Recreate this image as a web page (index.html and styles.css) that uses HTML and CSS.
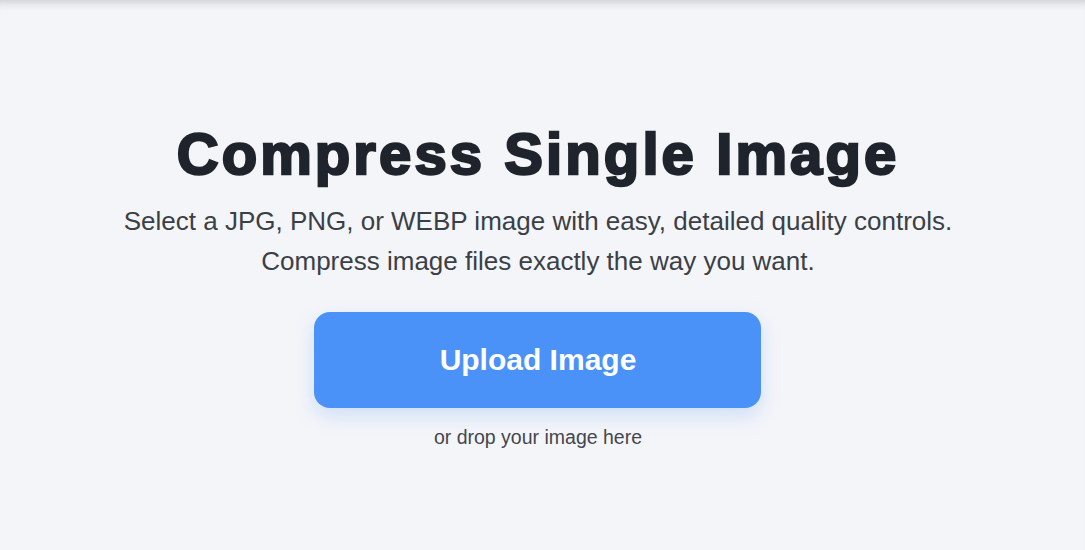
FILE: index.html
```html
<!DOCTYPE html>
<html>
<head>
<meta charset="utf-8">
<link rel="stylesheet" href="styles.css">
</head>
<body>
<main class="page">
  <section class="hero">
    <h1 class="title">Compress Single Image</h1>
    <p class="lead">Select a JPG, PNG, or WEBP image with easy, detailed quality controls.<br>Compress image files exactly the way you want.</p>
    <button class="upload">Upload Image</button>
    <p class="hint">or drop your image here</p>
  </section>
</main>
</body>
</html>
```
FILE: styles.css
```css
html, body {
  margin: 0;
  padding: 0;
  background: #f4f5f9;
}
body {
  font-family: "Liberation Sans", Arial, sans-serif;
}
.page {
  height: 550px;
  box-shadow: inset 0 10px 10px -8px rgba(0, 0, 0, 0.18);
  display: flex;
  justify-content: center;
  padding-right: 9px;
}
.hero {
  display: flex;
  flex-direction: column;
  align-items: center;
  padding-top: 121px;
}
.title {
  margin: 0;
  font-size: 58px;
  font-weight: 900;
  letter-spacing: 3.1px;
  -webkit-text-stroke: 2.4px #1f242c;
  color: #1f242c;
  line-height: 66px;
}
.lead {
  margin: 14px 0 0;
  font-size: 26px;
  line-height: 40px;
  color: #3b3f46;
  text-align: center;
}
.upload {
  margin-top: 31px;
  width: 447px;
  height: 96px;
  border: none;
  border-radius: 16px;
  background: #4a92f8;
  color: #fff;
  font-family: "Liberation Sans", Arial, sans-serif;
  font-size: 30px;
  font-weight: 700;
  box-shadow: 0 8px 20px rgba(74, 146, 248, 0.22);
}
.hint {
  margin: 18px 0 0;
  font-size: 19.5px;
  color: #44474d;
}
```
